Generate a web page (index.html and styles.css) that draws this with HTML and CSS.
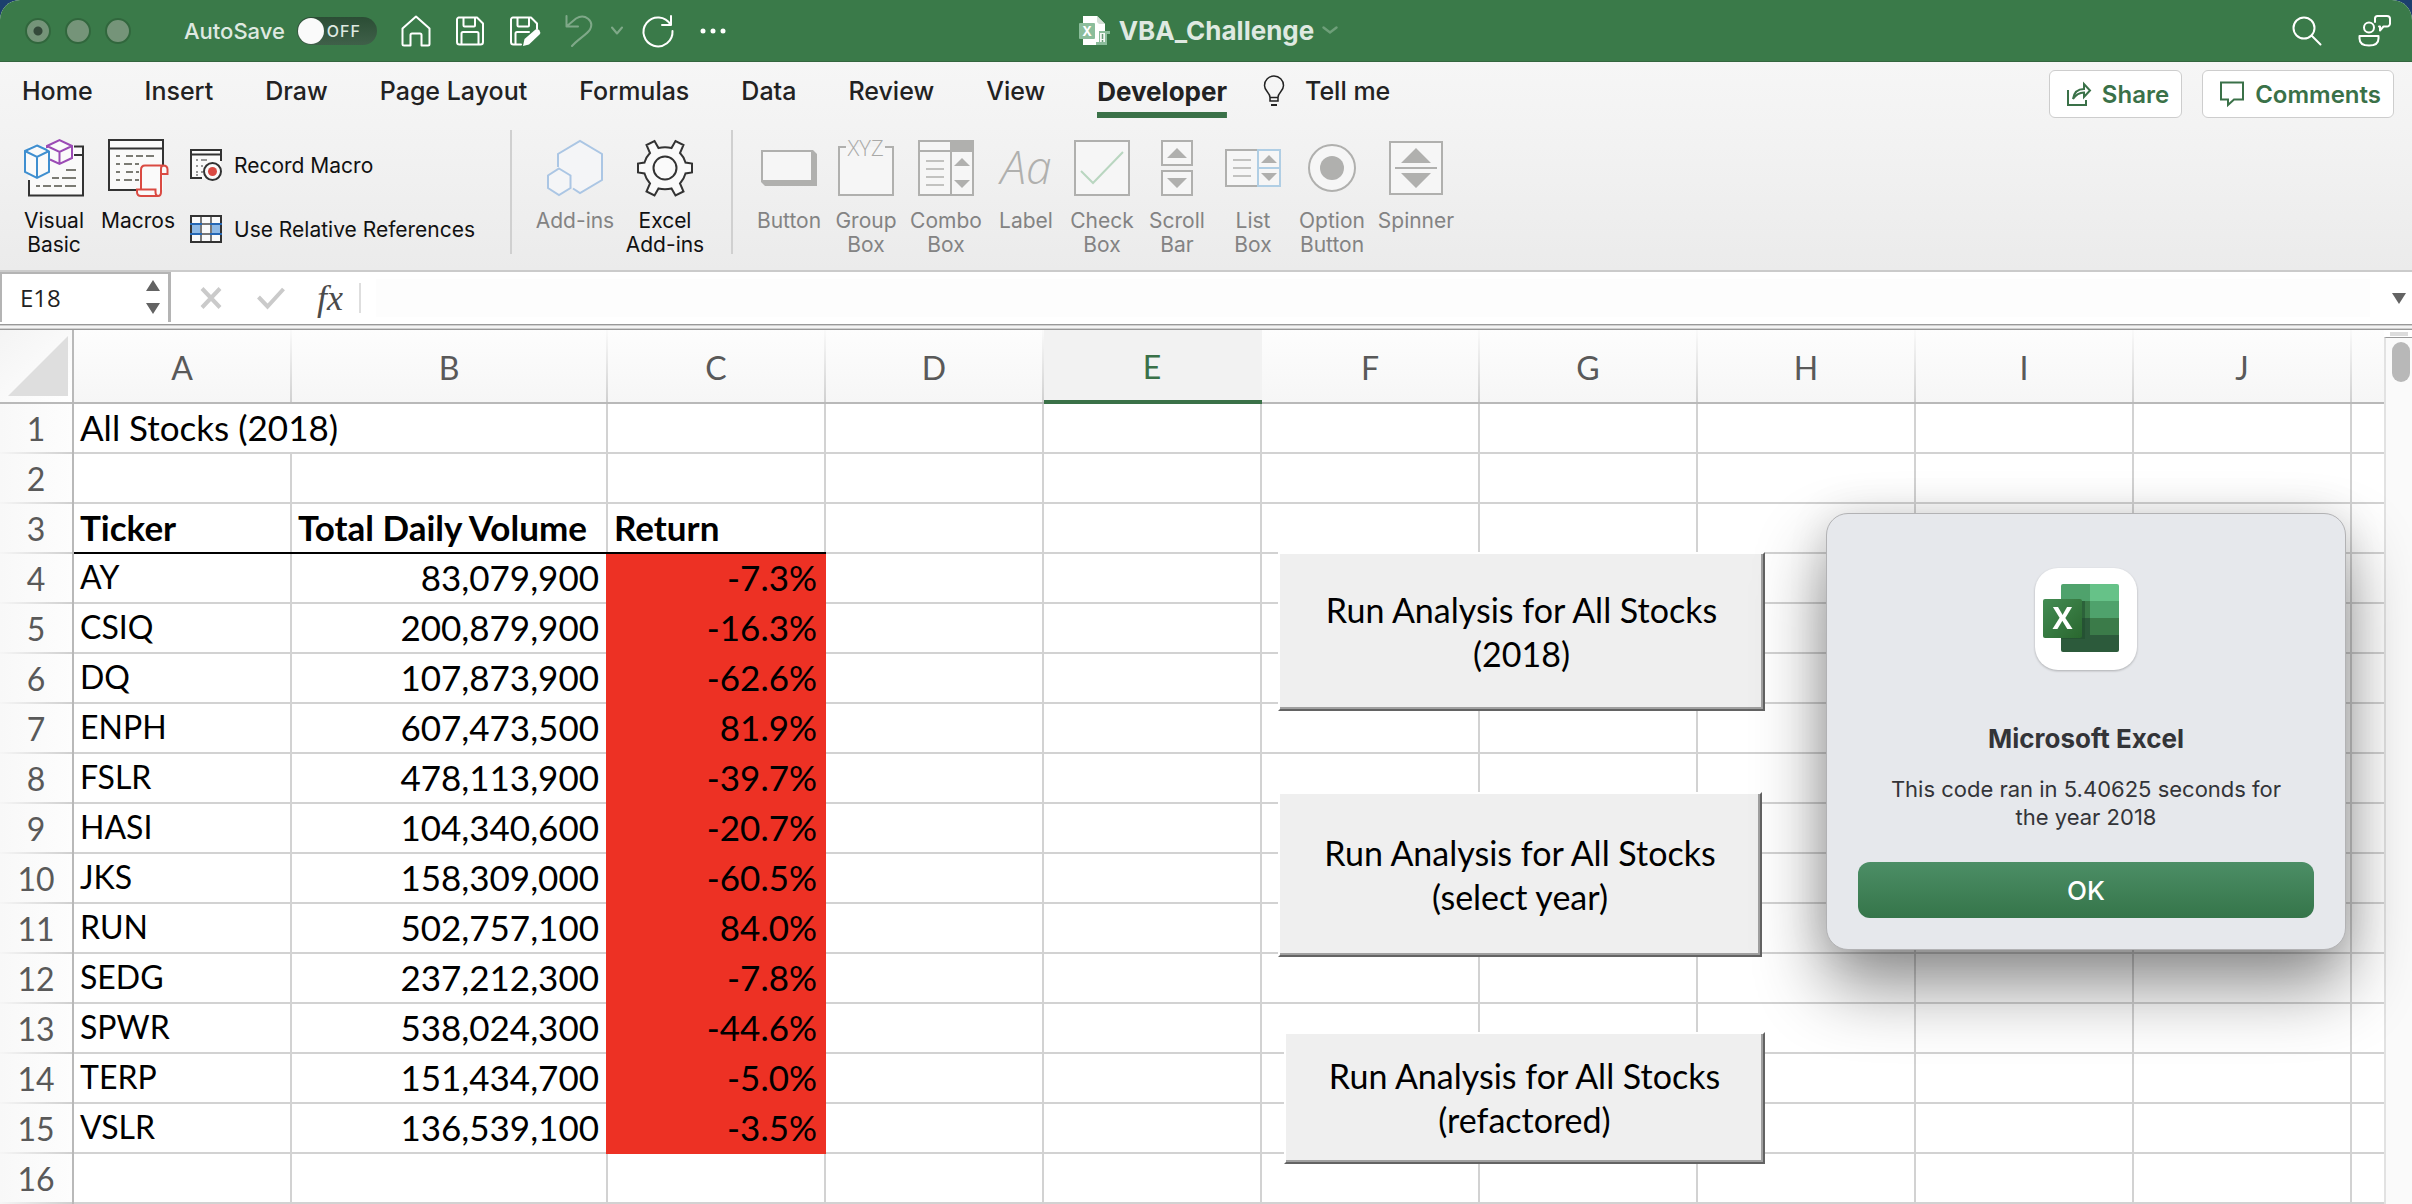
FILE: index.html
```html
<!DOCTYPE html>
<html lang="en">
<head>
<meta charset="utf-8">
<title>VBA_Challenge</title>
<link rel="stylesheet" href="styles.css">
</head>
<body>
<div class="window">
  <header class="titlebar">
    <div class="title-left">
      <div class="lights">
        <button class="light light-edited" aria-label="Close"></button>
        <button class="light" aria-label="Minimize"></button>
        <button class="light" aria-label="Zoom"></button>
      </div>
      <label class="autosave" for="autosave">AutoSave
        <span class="switch"><input type="checkbox" id="autosave"><span class="knob"></span><span class="switch-text">OFF</span></span>
      </label>
      <div class="quick">
        <button class="icon-btn" aria-label="Home"><svg width="30" height="32" viewBox="0 0 30 32"><path d="M1.500 13.500 15 1.500l13.500 12V29a1.500 1.500 0 0 1-1.500 1.500h-6.500V20a1.500 1.500 0 0 0-1.500-1.500h-8A1.500 1.500 0 0 0 9.500 20v10.500H3A1.500 1.500 0 0 1 1.500 29z"/></svg></button>
        <button class="icon-btn" aria-label="Save"><svg width="30" height="32" viewBox="0 0 30 32"><path d="M3.500 2.500H22l6 6V27a2.500 2.500 0 0 1-2.500 2.500h-21A2.500 2.500 0 0 1 2 27V4.500a2 2 0 0 1 2-2zM8.500 3v7.500a1 1 0 0 0 1 1H19a1 1 0 0 0 1-1V3M6.500 29V18.500a1.500 1.500 0 0 1 1.500-1.500h14a1.500 1.500 0 0 1 1.500 1.500V29"/></svg></button>
        <button class="icon-btn" aria-label="Save As"><svg width="32" height="32" viewBox="0 0 32 32"><path d="M28 14V8.500l-6-6H4a2 2 0 0 0-2 2V27a2.500 2.500 0 0 0 2.500 2.500H12M8.500 3v7.500a1 1 0 0 0 1 1H19a1 1 0 0 0 1-1V3M6.500 29V18.500a1.500 1.500 0 0 1 1.500-1.500h12"/><path class="solid" d="m14 31 1.500-7 11-9.500q2.500-1 4 1t0 4L20 29.500z"/></svg></button>
        <button class="icon-btn faded" aria-label="Undo"><svg width="28" height="32" viewBox="0 0 28 32"><path d="M1.500 1v10.500H13M2 11 11 3.500C20-2 29.500 6 25 14.500 22.500 19 12 25 7 31"/></svg></button>
        <button class="icon-btn faded undo-menu" aria-label="Undo history"><svg width="12" height="10" viewBox="0 0 12 10"><path d="m1 1.500 5 6 5-6"/></svg></button>
        <button class="icon-btn" aria-label="Redo"><svg width="34" height="34" viewBox="0 0 34 34"><path d="M30 2v9H21M29.500 10.500A14.500 14.500 0 1 0 31.500 17"/></svg></button>
        <button class="icon-btn" aria-label="More"><svg width="28" height="8" viewBox="0 0 28 8"><g class="solid"><circle cx="4" cy="4" r="2.500"/><circle cx="14" cy="4" r="2.500"/><circle cx="24" cy="4" r="2.500"/></g></svg></button>
      </div>
    </div>
    <h1 class="doc-title">
      <svg width="32" height="30" viewBox="0 0 32 30"><path d="M4 0h14l8 8v21H4z" fill="#fff"/><path d="M18 0l8 8h-6l-2-2z" fill="#d5dfd7"/><rect x="0" y="7" width="16" height="16" rx="1" fill="#8bbd9b"/><text x="8" y="19.500" text-anchor="middle" class="doc-x">X</text><path d="M20 15h11v3h-3v11H17v-3h3z" fill="#8bbd9b"/><path d="M21 17h5v9h-5z" fill="#f4f8f5"/><path d="M23.500 18v5m0 1v2" stroke="#6a9a78" stroke-width="1.500"/></svg>
      <span>VBA_Challenge</span>
      <svg width="16" height="9" viewBox="0 0 16 9"><path d="m1.500 1.500 6.500 5 6.500-5" fill="none" stroke="#6e9f79" stroke-width="2.500" stroke-linecap="round"/></svg>
    </h1>
    <div class="title-right">
      <button class="icon-btn" aria-label="Search"><svg width="30" height="30" viewBox="0 0 30 30"><circle cx="12" cy="12" r="10.500"/><path d="m19.500 19.500 9 9"/></svg></button>
      <button class="icon-btn" aria-label="Account"><svg width="34" height="34" viewBox="0 0 34 34"><circle cx="11" cy="13.500" r="5"/><path d="M1.500 22h19v2.500q0 7-9.500 7t-9.500-7zM19.500 2h9.500a3 3 0 0 1 3 3v4.500a3 3 0 0 1-3 3h-3.500l-3.500 4v-4h-1M17 8V4.500A2.500 2.500 0 0 1 19.500 2"/></svg></button>
    </div>
  </header>

  <section class="ribbon">
    <div class="tab-row">
      <nav class="tabs">
        <button>Home</button><button>Insert</button><button>Draw</button><button>Page Layout</button><button>Formulas</button><button>Data</button><button>Review</button><button>View</button><button class="active">Developer</button>
      </nav>
      <button class="tell-me">
        <svg width="22" height="32" viewBox="0 0 22 32"><path d="M7 22.500c0-5-5.500-6-5.500-12a9.500 9.500 0 0 1 19 0c0 6-5.500 7-5.500 12v3.500H7zM7 22.500h8" fill="none" stroke="#222" stroke-width="1.500"/><path d="M8 30h6" stroke="#222" stroke-width="2"/></svg>
        Tell me
      </button>
      <div class="share-row">
        <button class="outlined"><svg width="24" height="24" viewBox="0 0 24 24"><path d="M1 8v15h18v-5M6 17c1-7 5-10 11-10V2l6 6.500-6 6.500v-4.500c-5 0-8 2-11 6.500z"/></svg>Share</button>
        <button class="outlined"><svg width="24" height="26" viewBox="0 0 24 26"><path d="M1 1.500h22v17h-9l-6 5.500v-5.500H1z"/></svg>Comments</button>
      </div>
    </div>

    <div class="tools">
      <div class="group group-code">
        <button class="tool">
          <span class="tool-icon"><svg width="60" height="58" viewBox="0 0 60 58"><path d="M4.500 7H59v50H4.500z" fill="#fafafa"/><path d="M50 7.500h9v49H5V41M50 16h9" fill="none" stroke="#333" stroke-width="2"/><path d="M42 31h10M28 39h7m3 0h14M12 47h4m3 0h8m3 0h8m3 0h11" stroke="#7b7b74" stroke-width="2"/><path d="m13 6.500 12 5.500v21l-12 6-12-6V12z" fill="#fafafa" stroke="#3f8fd0" stroke-width="2"/><path d="m1 12 12 6 12-6M13 18v21" fill="none" stroke="#3f8fd0" stroke-width="2"/><path d="m35.500 1 12.500 6v12l-12.500 6L26 20V12l-3-2V7z" fill="#fafafa"/><path d="M23 9V7l12.500-6L48 7v12l-12.500 6L26 20.500M23 7l12.500 6L48 7M35.500 13v12" fill="none" stroke="#9b4bb5" stroke-width="2"/></svg></span>
          <span>Visual<br>Basic</span>
        </button>
        <button class="tool">
          <span class="tool-icon"><svg width="60" height="58" viewBox="0 0 60 58"><path d="M1 1h54v50H1z" fill="#fafafa"/><path d="M55 26V1H1v50h28M1 9.500h54" fill="none" stroke="#333" stroke-width="2"/><path d="M8 17h4m6 0h7m3 0h7m3 0h8M8 25h4m4 0h8m3 0h4M8 33h4m6 0h7m3 0h3M8 41h4m4 0h8m3 0h4" stroke="#7b7b74" stroke-width="2"/><path d="M33 50V31q0-4.500 4-4.500h18q4.500 0 4.500 4v4.500H53V53q0 4-3 4H33q-4 0-4-4v-2.500h18.500V53q0 4 3 4M53 35v-5q0-3 2-3.500" fill="#fafafa" stroke="#da4a42" stroke-width="2"/></svg></span>
          <span>Macros</span>
        </button>
        <div class="stack">
          <button class="wide"><svg width="32" height="32" viewBox="0 0 32 32"><path d="M1 1h30v29H1z" fill="#fafafa"/><path d="M31 12V1H1v28h11M1 5.500h30" fill="none" stroke="#333" stroke-width="2"/><path d="M6 11h2m3 0h6M6 17h2M6 23h2m-2 3h2m3-9h2m-2 6h2" stroke="#777" stroke-width="1.500"/><circle cx="22.500" cy="22.500" r="8.500" fill="#fafafa" stroke="#333" stroke-width="2"/><circle cx="22.500" cy="22.500" r="4.500" fill="#da4a42"/></svg>Record Macro</button>
          <button class="wide"><svg width="32" height="28" viewBox="0 0 32 28"><path d="M1 1h30v26H1z" fill="#fafafa"/><path d="M1 9h9v10H1zm21 0h9v10h-9z" fill="#8db9e6"/><path d="M11 1v26M21 1v26" stroke="#777" stroke-width="2"/><path d="M1 1h30v26H1z" fill="none" stroke="#333" stroke-width="2"/><path d="M0 9h12M20 9h12M0 19h12m8 0h12" stroke="#2567b4" stroke-width="2"/><path d="M12 9h8m-8 10h8" stroke="#777" stroke-width="2"/></svg>Use Relative References</button>
        </div>
      </div>
      <div class="group group-addins">
        <button class="tool" disabled>
          <span class="tool-icon"><svg width="56" height="56" viewBox="0 0 56 56" fill="#f4f5f7" stroke="#abc6e4" stroke-width="2"><path d="M11 27V14L33 1l22 13v26L33 53l-7-4.500"/><path d="m12 28.500 11.500 7V48L12 55 1 48V35.500z"/></svg></span>
          <span>Add-ins</span>
        </button>
        <button class="tool">
          <span class="tool-icon"><svg width="56" height="56" viewBox="0 0 56 56" fill="#fafafa" stroke="#333" stroke-width="2"><path d="m17.500 1 4 7q6.500-1.500 13 0l4-7 8 4-3.500 8q4 4 5.500 9.500l6.500 1v9l-6.500 1Q47 39 43 43.500l3.500 8-8 4-4-7q-6.500 1.500-13 0l-4 7-8-4 3.500-8Q9 39 7.500 33.500l-6.500-1v-9l6.500-1Q9 17 13 13L9.500 5z"/><circle cx="28" cy="28" r="11.500"/></svg></span>
          <span>Excel<br>Add-ins</span>
        </button>
      </div>
      <div class="group group-controls">
        <button class="tool" disabled>
          <span class="tool-icon"><svg width="56" height="36" viewBox="0 0 56 36"><path d="M0 0h52l4 4v32H4l-4-4z" fill="#b0b0ae"/><path d="M2 2h48v28H2z" fill="#f6f6f6"/></svg></span>
          <span>Button</span>
        </button>
        <button class="tool" disabled>
          <span class="tool-icon"><svg width="56" height="56" viewBox="0 0 56 56"><path d="M8 7H1v48h54V7h-8" fill="#f6f6f6" stroke="#b0b0ae" stroke-width="2"/><text x="27.500" y="16" text-anchor="middle" class="xyz">XYZ</text></svg></span>
          <span>Group<br>Box</span>
        </button>
        <button class="tool" disabled>
          <span class="tool-icon"><svg width="56" height="56" viewBox="0 0 56 56"><path d="M1 1h54v54H1zM1 11h54M33 11v44" fill="#f6f6f6" stroke="#b0b0ae" stroke-width="2"/><path d="M32 0h24v12H32zm4 26 8-8 8 8zm0 14 8 8 8-8z" fill="#b0b0ae"/><path d="M8 21h18M8 29h18M8 37h18M8 45h18" stroke="#c2c2c0" stroke-width="2"/></svg></span>
          <span>Combo<br>Box</span>
        </button>
        <button class="tool" disabled>
          <span class="tool-icon"><svg width="56" height="40" viewBox="0 0 56 40"><text x="28" y="36" text-anchor="middle" class="aa">Aa</text></svg></span>
          <span>Label</span>
        </button>
        <button class="tool" disabled>
          <span class="tool-icon"><svg width="56" height="56" viewBox="0 0 56 56"><path d="M1 1h54v54H1z" fill="#f6f6f6" stroke="#b0b0ae" stroke-width="2"/><path d="m7 31 12 12 30-31" fill="none" stroke="#b9d6c0" stroke-width="2"/></svg></span>
          <span>Check<br>Box</span>
        </button>
        <button class="tool" disabled>
          <span class="tool-icon"><svg width="32" height="56" viewBox="0 0 32 56"><path d="M1 1h30v24H1zM1 31h30v24H1z" fill="#f6f6f6" stroke="#b0b0ae" stroke-width="2"/><path d="m6 18 10-10 10 10zm0 20 10 10 10-10z" fill="#b0b0ae"/></svg></span>
          <span>Scroll<br>Bar</span>
        </button>
        <button class="tool" disabled>
          <span class="tool-icon"><svg width="56" height="38" viewBox="0 0 56 38"><path d="M33 1H1v36h32" fill="#f6f6f6" stroke="#b0b0ae" stroke-width="2"/><path d="M33 1h22v36H33zM33 19h22" fill="#f6f6f6" stroke="#b0cee4" stroke-width="2"/><path d="m36 14 8-8 8 8zm0 10 8 8 8-8z" fill="#b0b0ae"/><path d="M8 11h18M8 19h18M8 27h18" stroke="#c2c2c0" stroke-width="2"/></svg></span>
          <span>List<br>Box</span>
        </button>
        <button class="tool" disabled>
          <span class="tool-icon"><svg width="48" height="48" viewBox="0 0 48 48"><circle cx="24" cy="24" r="23" fill="#f6f6f6" stroke="#b0b0ae" stroke-width="2"/><circle cx="24" cy="24" r="12" fill="#b0b0ae"/></svg></span>
          <span>Option<br>Button</span>
        </button>
        <button class="tool" disabled>
          <span class="tool-icon"><svg width="54" height="54" viewBox="0 0 54 54"><path d="M1 1h52v52H1z" fill="#f6f6f6" stroke="#b0b0ae" stroke-width="2"/><path d="m12 22 15-15 15 15zm0 10 15 15 15-15z" fill="#b0b0ae"/><path d="M6 27h42" stroke="#b0b0ae" stroke-width="2"/></svg></span>
          <span>Spinner</span>
        </button>
      </div>
    </div>
  </section>

  <section class="formula-bar">
    <div class="name-box">
      <input type="text" value="E18" aria-label="Name box">
      <button class="stepper" aria-label="Names"><svg width="14" height="34" viewBox="0 0 14 34" fill="#636363"><path d="M0 11 7 0l7 11zM0 23l7 11 7-11z"/></svg></button>
    </div>
    <button class="fx-btn" aria-label="Cancel"><svg width="22" height="22" viewBox="0 0 22 22"><path d="m2 1.500 18 19m0-19-18 19" stroke="#cacaca" stroke-width="4"/></svg></button>
    <button class="fx-btn" aria-label="Enter"><svg width="28" height="22" viewBox="0 0 28 22"><path d="m1.500 10 9 9.500L26.500 2" fill="none" stroke="#cacaca" stroke-width="4"/></svg></button>
    <button class="fx-btn fx" aria-label="Insert function">fx</button>
    <input class="formula" type="text" aria-label="Formula">
    <button class="expand" aria-label="Expand formula bar"><svg width="14" height="11" viewBox="0 0 14 11"><path d="M0 0h14L7 11z" fill="#636363"/></svg></button>
  </section>
  <div class="splitter"></div>

  <main class="sheet">
    <table class="grid">
      <colgroup><col class="c-num"><col class="c-std"><col class="c-volume"><col class="c-std"><col class="c-std"><col class="c-std"><col class="c-std"><col class="c-std"><col class="c-std"><col class="c-std"><col class="c-std"><col></colgroup>
      <thead>
        <tr><th class="corner"><svg width="60" height="60" viewBox="0 0 60 60"><path d="M60 0v60H0z" fill="#dedede"/></svg></th><th>A</th><th>B</th><th>C</th><th>D</th><th class="selected">E</th><th>F</th><th>G</th><th>H</th><th>I</th><th>J</th><th class="last"></th></tr>
      </thead>
      <tbody>
        <tr><th>1</th><td colspan="2" class="caption">All Stocks (2018)</td><td></td><td></td><td></td><td></td><td></td><td></td><td></td><td></td><td></td></tr>
        <tr><th>2</th><td></td><td></td><td></td><td></td><td></td><td></td><td></td><td></td><td></td><td></td><td></td></tr>
        <tr class="heads"><th>3</th><td>Ticker</td><td>Total Daily Volume</td><td>Return</td><td></td><td></td><td></td><td></td><td></td><td></td><td></td><td></td></tr>
        <tr class="first"><th>4</th><td>AY</td><td class="num">83,079,900</td><td class="num red">-7.3%</td><td></td><td></td><td></td><td></td><td></td><td></td><td></td><td></td></tr>
        <tr><th>5</th><td>CSIQ</td><td class="num">200,879,900</td><td class="num red">-16.3%</td><td></td><td></td><td></td><td></td><td></td><td></td><td></td><td></td></tr>
        <tr><th>6</th><td>DQ</td><td class="num">107,873,900</td><td class="num red">-62.6%</td><td></td><td></td><td></td><td></td><td></td><td></td><td></td><td></td></tr>
        <tr><th>7</th><td>ENPH</td><td class="num">607,473,500</td><td class="num red">81.9%</td><td></td><td></td><td></td><td></td><td></td><td></td><td></td><td></td></tr>
        <tr><th>8</th><td>FSLR</td><td class="num">478,113,900</td><td class="num red">-39.7%</td><td></td><td></td><td></td><td></td><td></td><td></td><td></td><td></td></tr>
        <tr><th>9</th><td>HASI</td><td class="num">104,340,600</td><td class="num red">-20.7%</td><td></td><td></td><td></td><td></td><td></td><td></td><td></td><td></td></tr>
        <tr><th>10</th><td>JKS</td><td class="num">158,309,000</td><td class="num red">-60.5%</td><td></td><td></td><td></td><td></td><td></td><td></td><td></td><td></td></tr>
        <tr><th>11</th><td>RUN</td><td class="num">502,757,100</td><td class="num red">84.0%</td><td></td><td></td><td></td><td></td><td></td><td></td><td></td><td></td></tr>
        <tr><th>12</th><td>SEDG</td><td class="num">237,212,300</td><td class="num red">-7.8%</td><td></td><td></td><td></td><td></td><td></td><td></td><td></td><td></td></tr>
        <tr><th>13</th><td>SPWR</td><td class="num">538,024,300</td><td class="num red">-44.6%</td><td></td><td></td><td></td><td></td><td></td><td></td><td></td><td></td></tr>
        <tr><th>14</th><td>TERP</td><td class="num">151,434,700</td><td class="num red">-5.0%</td><td></td><td></td><td></td><td></td><td></td><td></td><td></td><td></td></tr>
        <tr><th>15</th><td>VSLR</td><td class="num">136,539,100</td><td class="num red">-3.5%</td><td></td><td></td><td></td><td></td><td></td><td></td><td></td><td></td></tr>
        <tr><th>16</th><td></td><td></td><td></td><td></td><td></td><td></td><td></td><td></td><td></td><td></td><td></td></tr>
      </tbody>
    </table>
    <div class="scrollbar"><div class="split-handle"></div><div class="track"><div class="thumb"></div></div></div>

    <button class="macro macro-2018">Run Analysis for All Stocks<br>(2018)</button>
    <button class="macro macro-year">Run Analysis for All Stocks<br>(select year)</button>
    <button class="macro macro-refactored">Run Analysis for All Stocks<br>(refactored)</button>

    <dialog class="alert" open aria-labelledby="alert-title">
      <svg class="app-icon" width="104" height="104" viewBox="0 0 104 104">
        <defs>
          <linearGradient id="tile" x1="0" y1="0" x2="1" y2="1"><stop offset="0" stop-color="#438c53"/><stop offset="1" stop-color="#2a672f"/></linearGradient>
          <clipPath id="book"><rect x="27" y="17" width="58" height="68" rx="2"/></clipPath>
        </defs>
        <rect x="1" y="1" width="102" height="102" rx="23" fill="#fff"/>
        <g clip-path="url(#book)">
          <path d="M27 17h29v17H27z" fill="#4fa26c"/><path d="M56 17h29v17H56z" fill="#66c288"/>
          <path d="M27 34h29v17H27z" fill="#3b7b49"/><path d="M56 34h29v17H56z" fill="#4fa26c"/>
          <path d="M27 51h58v34H27z" fill="#2c5a3b"/><path d="M56 51h29v17H56z" fill="#3b7b49"/>
          <path d="M27 34h24v38H27z" fill="#1e4a2b" opacity=".5"/>
        </g>
        <rect x="9" y="32" width="39" height="39" rx="2" fill="url(#tile)"/>
        <text x="28.500" y="62" text-anchor="middle" class="app-x">X</text>
      </svg>
      <h2 id="alert-title">Microsoft Excel</h2>
      <p>This code ran in 5.40625 seconds for the year 2018</p>
      <form method="dialog"><button class="ok">OK</button></form>
    </dialog>
  </main>
</div>
</body>
</html>
```
FILE: styles.css
```css
* { box-sizing: border-box; }

body {
  margin: 0;
  background: #1c3f6e;
  font-family: Inter, "Liberation Sans", sans-serif;
  color: #222;
}

button, input {
  font: inherit;
  color: inherit;
  border: 0;
  padding: 0;
  margin: 0;
  background: none;
}

svg { display: block; flex: none; overflow: visible; }

.window {
  min-height: 100vh;
  display: flex;
  flex-direction: column;
  border-radius: 20px 20px 0 0;
  overflow: hidden;
  background: #fff;
}

/* Title bar */
.titlebar {
  display: grid;
  grid-template-columns: 1fr auto 1fr;
  align-items: center;
  height: 62px;
  padding: 0 20px 0 25px;
  background: #3a7a49;
  border-bottom: 1px solid #34663f;
  color: #dfe9e1;
}

.title-left, .lights, .autosave, .quick, .title-right, .doc-title {
  display: flex;
  align-items: center;
}

.lights { gap: 14px; }

.light {
  width: 26px;
  height: 26px;
  border-radius: 50%;
  background: #759479;
  border: 2px solid #31673d;
}

.light-edited { background: radial-gradient(circle, #34493a 0 4px, #759479 5px); }

.autosave {
  margin-left: 53px;
  gap: 12px;
  font-size: 22px;
  font-weight: 500;
}

.switch {
  position: relative;
  display: flex;
  align-items: center;
  justify-content: flex-end;
  width: 80px;
  height: 28px;
  padding-right: 16px;
  border-radius: 14px;
  background: linear-gradient(#2b4d35, #3f6049);
}

.switch input { position: absolute; inset: 0; opacity: 0; }

.knob {
  position: absolute;
  left: 1px;
  width: 26px;
  height: 26px;
  border-radius: 50%;
  background: #fafafa;
}

.switch-text { font-size: 16px; font-weight: 500; letter-spacing: 1px; }

.quick { margin-left: 24px; gap: 24px; }

.icon-btn svg {
  fill: none;
  stroke: #fff;
  stroke-width: 2;
  stroke-linejoin: round;
  stroke-linecap: round;
}

.icon-btn .solid { fill: #fff; stroke: none; }
.faded { opacity: .35; }
.undo-menu { margin: 0 -6px; }

.doc-title {
  gap: 8px;
  margin: 0;
  font-size: 26px;
  font-weight: 700;
}

.doc-x { font: 700 13px Inter, sans-serif; fill: #fff; }
.title-right { justify-content: flex-end; gap: 36px; }

/* Ribbon */
.ribbon {
  background: linear-gradient(#f6f6f6, #f2f2f2 40%, #ebebeb);
  border-bottom: 2px solid #cbcbcb;
}

.tab-row {
  display: flex;
  align-items: flex-start;
  height: 68px;
  padding: 2px 18px 0 22px;
}

.tabs { display: flex; gap: 52px; }

.tabs button, .tell-me {
  height: 54px;
  font-size: 25px;
  font-weight: 500;
}

.tabs .active {
  font-size: 26px;
  font-weight: 700;
  background: linear-gradient(#3a7148, #3a7148) bottom / 100% 6px no-repeat;
}

.tell-me { display: flex; align-items: center; gap: 20px; margin-left: 36px; }
.share-row { display: flex; gap: 20px; margin: 6px 0 0 auto; }

.outlined {
  display: flex;
  align-items: center;
  gap: 11px;
  height: 48px;
  padding: 0 12px 0 17px;
  border: 1px solid #cdcdcd;
  border-radius: 6px;
  background: #fff;
  color: #3a7148;
  font-size: 24px;
  font-weight: 600;
}

.outlined svg { fill: none; stroke: #3a7148; stroke-width: 2; }

.tools {
  display: flex;
  height: 140px;
  padding-bottom: 16px;
}

.group {
  display: flex;
  align-items: flex-start;
  padding-top: 9px;
  border-right: 2px solid #d0d0d0;
}

.group-code { width: 512px; padding-left: 12px; }
.group-addins { width: 221px; padding-left: 18px; }

.group-controls {
  display: grid;
  grid-template-columns: 78px 76px 84px 76px 76px 74px 78px 80px 88px;
  padding-left: 17px;
  border-right: 0;
}

.tool {
  display: flex;
  flex-direction: column;
  align-items: center;
  gap: 12px;
  width: 84px;
  font-size: 21px;
  line-height: 24px;
  text-align: center;
  white-space: nowrap;
  color: #111;
}

.group-controls .tool { width: auto; }
.group-addins .tool { width: 90px; }
.tool:disabled { color: #838383; }

.tool-icon {
  display: flex;
  align-items: center;
  justify-content: center;
  height: 58px;
}

.xyz { font: 300 22px "Open Sans", sans-serif; fill: #a9a9a7; }
.aa { font: italic 300 46px "Open Sans", sans-serif; fill: #b0b0ae; }

.stack { display: flex; flex-direction: column; gap: 32px; padding: 10px 0 0 10px; }

.wide {
  display: flex;
  align-items: center;
  gap: 12px;
  height: 32px;
  font-size: 21px;
  color: #111;
  white-space: nowrap;
}

/* Formula bar */
.formula-bar { display: flex; align-items: center; height: 52px; background: #fff; }

.name-box {
  display: flex;
  align-items: center;
  width: 171px;
  height: 50px;
  padding: 0 8px 2px 18px;
  border: 2px solid #b4b4b4;
  border-width: 2px 3px 0 2px;
  align-self: flex-start;
}

.name-box input {
  flex: 1;
  min-width: 0;
  font-family: "Open Sans", sans-serif;
  font-size: 24px;
}

.fx-btn {
  display: flex;
  align-items: center;
  justify-content: center;
  width: 60px;
  height: 40px;
}

.name-box + .fx-btn { margin-left: 10px; }

.fx {
  border-right: 2px solid #dedede;
  height: 30px;
  font: italic 36px "Liberation Serif", serif;
  color: #4b4b4b;
}

.formula { flex: 1; min-width: 0; height: 38px; margin: 0 22px 0 15px; background: #fdfdfd; }
.expand { margin-right: 6px; }

.splitter {
  height: 6px;
  background: linear-gradient(#999 0 1px, #d0d0d0 1px 2px, #f4f4f4 2px 4px, #d0d0d0 4px 5px, #999 5px 6px);
}

/* Sheet */
.sheet {
  position: relative;
  flex: 1;
  display: flex;
  font-family: Lato, "Liberation Sans", sans-serif;
  color: #000;
}

.grid {
  flex: 1;
  min-width: 0;
  table-layout: fixed;
  border-collapse: separate;
  border-spacing: 0;
  font-size: 32px;
  line-height: 40px;
}

.c-num { width: 74px; }
.c-std { width: 218px; }
.c-volume { width: 316px; }

.grid th { font-weight: 400; color: #595959; padding: 0; }

.grid thead th {
  height: 74px;
  padding: 4px 2px 0 0;
  border-bottom: 2px solid #b9b9b9;
  background:
    linear-gradient(#fafafa, #d0d0d0) right / 2px 100% no-repeat,
    linear-gradient(#fdfdfd, #f6f6f6);
}

.grid thead .last { background: linear-gradient(#fdfdfd, #f6f6f6); }

.grid thead .selected {
  color: #3a7148;
  border-bottom: 4px solid #3a7148;
  background: #f2f2f2;
}

.grid thead .corner {
  padding: 0;
  border-right: 2px solid #b9b9b9;
  background: linear-gradient(135deg, #f4f4f4, #fff);
  vertical-align: middle;
}

.corner svg { margin-left: 8px; }

.grid tbody th {
  border-right: 2px solid #b9b9b9;
  background:
    linear-gradient(90deg, #f6f6f6, #cfcfcf) bottom / 100% 2px no-repeat,
    linear-gradient(90deg, #f8f8f8, #fdfdfd);
}

.grid td {
  height: 50px;
  padding: 0 6px 2px;
  border-right: 2px solid #d2d2d2;
  border-bottom: 2px solid #d2d2d2;
  white-space: nowrap;
}

.grid td:last-child { border-right: 0; }
.grid .caption, .heads td, .grid .num { font-size: 35px; }
.heads td { font-weight: 700; }
.grid .num { padding-right: 7px; text-align: right; }

.grid .red {
  background: #ed3124;
  border-color: #ed3124;
  box-shadow: -2px 0 0 #ed3124;
}

/* The rule under the column heads, drawn unbroken across the cell borders */
.grid .first td:nth-child(-n+3) { box-shadow: 0 -2px 0 #000; }
.grid .first .red { box-shadow: 0 -2px 0 #000, -2px 0 0 #ed3124; }

.scrollbar { width: 28px; display: flex; flex-direction: column; }
.split-handle { width: 18px; height: 4px; margin: 2px 0 1px 6px; background: #dcdcdc; }
.track { flex: 1; border-top: 1px solid #999; border-left: 2px solid #e2e2e2; background: #fafafa; }
.thumb { width: 18px; height: 40px; margin: 4px 0 0 6px; border-radius: 9px; background: #b8b8b8; }

/* Form buttons that float over the cells */
.macro {
  position: absolute;
  background: #efefef;
  border: 2px solid #fff;
  border-right-color: #636363;
  border-bottom-color: #636363;
  box-shadow: inset -2px -2px 0 #a0a0a0;
  font-size: 34px;
  line-height: 44px;
  text-align: center;
}

.macro-2018 { left: 1278px; top: 222px; width: 487px; height: 159px; }
.macro-year { left: 1278px; top: 462px; width: 484px; height: 165px; }
.macro-refactored { left: 1284px; top: 702px; width: 481px; height: 132px; }

/* Alert */
.alert {
  position: absolute;
  left: 1826px;
  right: auto;
  top: 183px;
  width: 520px;
  margin: 0;
  padding: 53px 31px 31px;
  border: 1px solid #b2b2b4;
  border-radius: 22px;
  background: #e6e8ec;
  box-shadow: 0 36px 70px rgba(0, 0, 0, .45), 0 0 40px rgba(0, 0, 0, .1);
  font-family: Inter, "Liberation Sans", sans-serif;
  color: #333438;
  text-align: center;
}

.app-icon { margin: 0 auto; filter: drop-shadow(0 1px 1px rgba(0, 0, 0, .25)); }
.app-x { font: 700 30px "Open Sans", sans-serif; fill: #fff; }
.alert h2 { margin: 52px 0 0; font-size: 26px; line-height: 32px; font-weight: 700; }
.alert p { margin: 20px 20px 31px; font-size: 22px; line-height: 28px; }

.ok {
  display: block;
  width: 100%;
  height: 56px;
  border-radius: 12px;
  background: linear-gradient(#4c8e66, #35754a);
  color: #fff;
  font-size: 26px;
  font-weight: 500;
}
```
